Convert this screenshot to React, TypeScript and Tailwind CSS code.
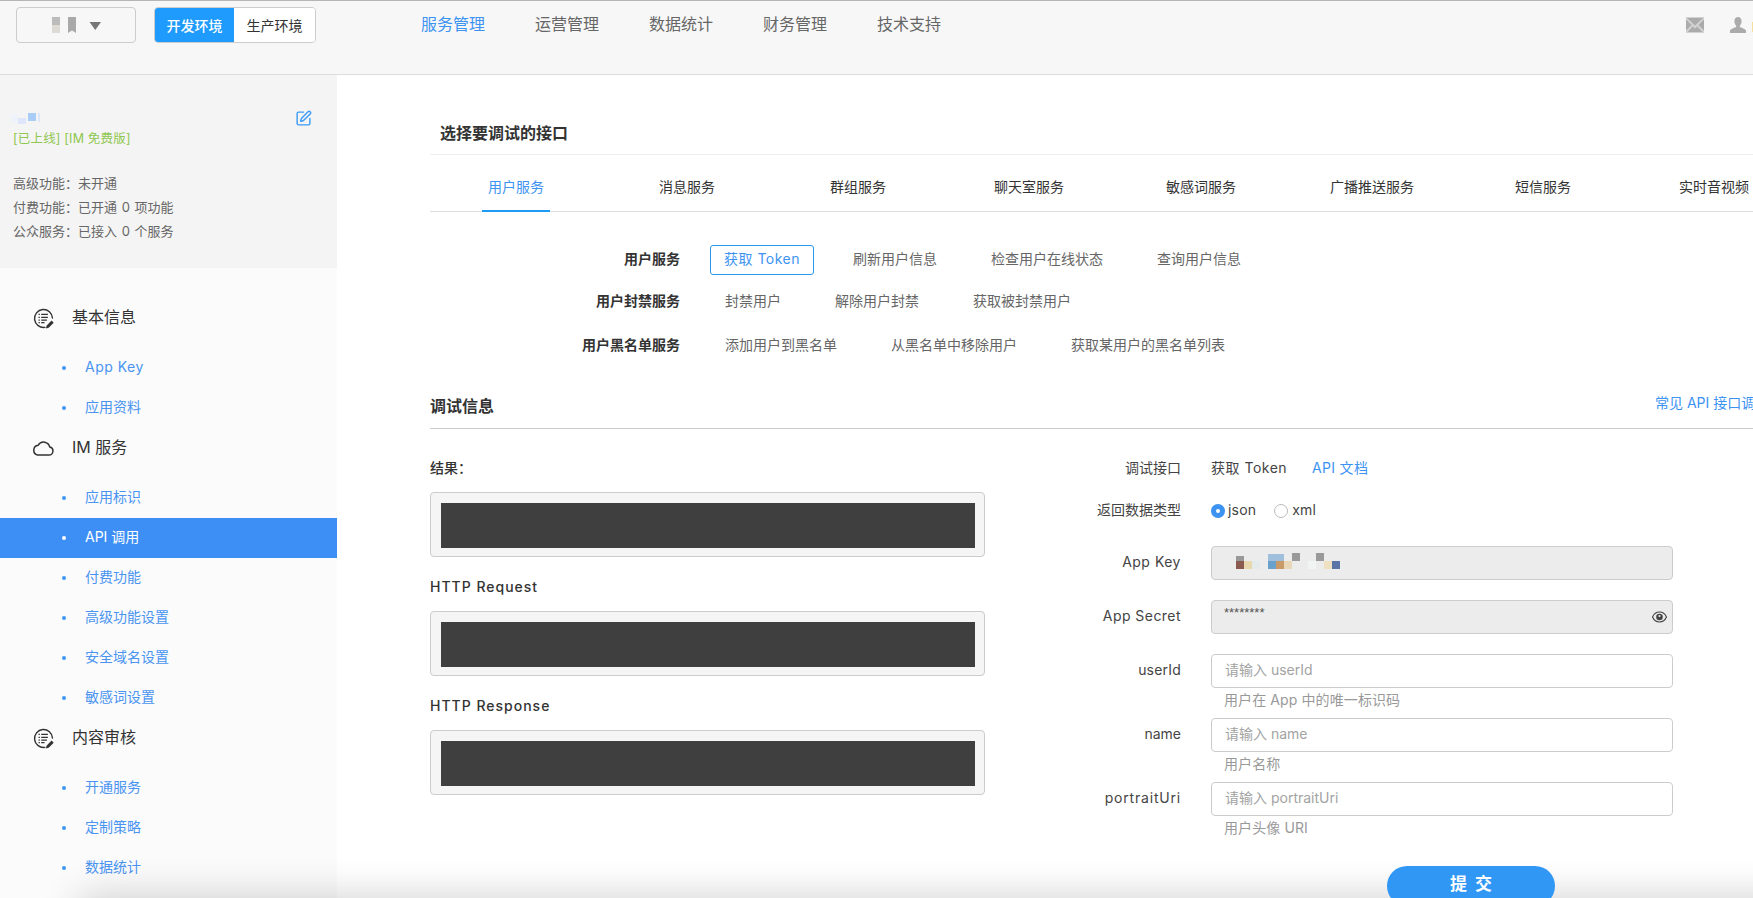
import React from "react";
import { SquarePen } from "lucide-react";

const FONT = "font-['Inter','Noto_Sans_CJK_SC',sans-serif]";

function ListEditIcon() {
  return (
    <svg width="21" height="21" viewBox="0 0 22 22" fill="none" className="shrink-0">
      <path d="M12.5 20.3A9.4 9.4 0 1 1 20.4 10.5" stroke="#333" strokeWidth="1.5" strokeLinecap="round" />
      <path d="M8.6 6.8h7M8.6 9.7h7M8.6 12.6h6M8.6 15.4h3.5" stroke="#333" strokeWidth="1.3" />
      <path d="M5.8 6.8h1.4M5.8 9.7h1.4M5.8 12.6h1.4M5.8 15.4h1.4" stroke="#333" strokeWidth="1.3" />
      <path d="M13.5 21.5l.7-3 5.2-5.4 2.3 2.3-5.3 5.4z" fill="#333" />
    </svg>
  );
}

function CloudIcon() {
  return (
    <svg width="22" height="16" viewBox="0 0 22 16" fill="none" className="shrink-0 -ml-px">
      <path
        d="M5.500 15h11.300a4 4 0 0 0 1-7.900A6.300 6.300 0 0 0 6.200 5.200 5 5 0 0 0 5.500 15z"
        stroke="#333"
        strokeWidth="1.500"
        strokeLinejoin="round"
      />
    </svg>
  );
}

function MailIcon() {
  return (
    <svg width="18" height="16" viewBox="0 0 18 16">
      <rect width="18" height="16" fill="#d2d2d2" />
      <path d="M1 1h16L9 8.600z" fill="#ababab" />
      <path d="M0 2.500v11l5.600-5.600zM18 2.500v11l-5.600-5.600z" fill="#ababab" />
      <path d="M1.500 15l5.200-5.600L9 11.400l2.300-2 5.200 5.600z" fill="#ababab" />
    </svg>
  );
}

function PersonIcon() {
  return (
    <svg width="16" height="16" viewBox="0 0 16 16">
      <path d="M8 0c2.200 0 3.600 1.700 3.600 4.200 0 1.800-.8 3.500-1.700 4.400v1.300c.9.700 5.100 1.400 6.100 3.500V16H0v-2.600c1-2.100 5.200-2.800 6.100-3.500V8.600C5.200 7.700 4.400 6 4.400 4.200 4.400 1.700 5.800 0 8 0z" fill="#ababab" />
    </svg>
  );
}

function EyeIcon() {
  return (
    <svg width="15" height="12" viewBox="0 0 15 12">
      <path d="M0.500 6C2 2.500 4.500 1 7.500 1s5.500 1.500 7 5c-1.500 3.500-4 5-7 5s-5.500-1.500-7-5z" fill="none" stroke="#444" strokeWidth="1.200" />
      <circle cx="7.500" cy="6" r="3.300" fill="#444" />
      <circle cx="7.500" cy="5" r="1.100" fill="#eee" />
    </svg>
  );
}

function MenuHead({ icon, label }: { icon: React.ReactNode; label: string }) {
  return (
    <div className="flex items-center h-10 mb-2.5 text-[16px] text-[#333]">
      <span className="w-[72px] pl-[33px] flex items-center">{icon}</span>
      <span className="mb-[2px]">{label}</span>
    </div>
  );
}

function MenuItem({ label, latin, active }: { label: string; latin?: boolean; active?: boolean }) {
  return (
    <div className={active ? "flex items-center h-10 pl-[62px] text-[14px] text-white bg-[#3d8ff5]" : "flex items-center h-10 pl-[62px] text-[14px] text-[#4a94f0]"}>
      <span className={active ? "w-1 h-1 rounded-full bg-white mr-[19px]" : "w-1 h-1 rounded-full bg-[#3d96ef] mr-[19px]"} />
      <span className={latin ? "mb-[3px] tracking-[0.5px]" : "mb-[3px]"}>{label}</span>
    </div>
  );
}

const tabs = [
  { label: "用户服务", cls: "ml-[52px] text-[#3d93f2] border-[#1e9bf5]" },
  { label: "消息服务", cls: "ml-[103px] text-[#333] border-transparent" },
  { label: "群组服务", cls: "ml-[103px] text-[#333] border-transparent" },
  { label: "聊天室服务", cls: "ml-[96px] text-[#333] border-transparent" },
  { label: "敏感词服务", cls: "ml-[90px] text-[#333] border-transparent" },
  { label: "广播推送服务", cls: "ml-[82px] text-[#333] border-transparent" },
  { label: "短信服务", cls: "ml-[89px] text-[#333] border-transparent" },
  { label: "实时音视频", cls: "ml-[96px] text-[#333] border-transparent" },
];

function Api({ label, active }: { label: string; active?: boolean }) {
  return (
    <span className={active ? "h-[30px] w-[104px] pb-[3px] flex items-center justify-center rounded-[3px] border border-[#2a97f0] text-[#3d93f2] text-[14px] tracking-[0.5px]" : "h-[30px] pb-[3px] flex items-center px-[15px] text-[#666] text-[14px] whitespace-nowrap"}>
      {label}
    </span>
  );
}

function ApiRow({ title, items, cls }: { title: string; items: React.ReactNode; cls: string }) {
  return (
    <div className={"flex items-center h-[30px] " + cls}>
      <div className="w-[250px] mb-[3px] text-right font-semibold text-[14px] text-[#333]">{title}</div>
      <div className="ml-[30px] flex items-center gap-6">{items}</div>
    </div>
  );
}

function ResultBox({ title, cls, wide }: { title: string; cls: string; wide?: boolean }) {
  return (
    <div className={cls}>
      <div className={wide ? "h-6 pb-[3px] flex items-center text-[14px] font-medium text-[#333] tracking-[1px] mb-[11px]" : "h-6 pb-[3px] flex items-center text-[14px] font-medium text-[#333] mb-[11px]"}>{title}</div>
      <div className="h-[65px] border border-[#ccc] rounded-[4px] bg-[#f5f5f5] pl-[10px] pr-[9px] pt-[10px] pb-[8px]">
        <div className="h-[45px] bg-[#3f3f3f]" />
      </div>
    </div>
  );
}

function FieldLabel({ children, cls }: { children: React.ReactNode; cls?: string }) {
  return <div className={"w-[196px] mb-[3px] text-right text-[14px] text-[#444] " + (cls ?? "")}>{children}</div>;
}

function TextField({ label, name, hint, cls }: { label: string; name: string; hint: string; cls?: string }) {
  return (
    <div>
      <div className="flex items-center">
        <FieldLabel cls={cls}>{label}</FieldLabel>
        <input
          readOnly
          placeholder={"请输入 " + name}
          className="ml-[30px] w-[462px] h-[34px] px-[13px] pb-[3px] border border-[#ccc] rounded-[4px] bg-white text-[14px] outline-none placeholder:text-[#a3a3a3]"
        />
      </div>
      <div className="ml-[239px] h-[26px] pb-[3px] flex items-center text-[14px] tracking-[0.1px] text-[#999]">{hint}</div>
    </div>
  );
}

export default function App() {
  return (
    <div className={"relative w-[1753px] h-[898px] overflow-hidden flex flex-col bg-white " + FONT}>
      <header className="h-[75px] shrink-0 flex items-start bg-[#f7f7f7] border-t border-t-[#b5b5b5] border-b border-b-[#ddd]">
        <div className="ml-4 mt-[6px] w-[120px] h-9 border border-[#ccc] rounded-[4px] flex items-center pl-[35px]">
          <svg width="50" height="16" viewBox="0 0 50 16">
            <rect x="0" y="0" width="8" height="8" fill="#bcbcbc" />
            <rect x="0" y="8" width="8" height="8" fill="#dcdcd4" />
            <path d="M16 0h8v16l-4-2.500-4 2.500z" fill="#a9a9a9" />
            <path d="M37.500 5h11.500l-5.750 8z" fill="#777" />
          </svg>
        </div>
        <div className="ml-[18px] mt-[6px] w-[162px] h-9 flex border border-[#ccc] rounded-[4px] overflow-hidden text-[14px]">
          <div className="w-[79px] flex items-center justify-center bg-[#1e9bfc] text-white font-medium">开发环境</div>
          <div className="flex-1 flex items-center justify-center bg-white text-[#333]">生产环境</div>
        </div>
        <nav className="ml-[105px] mt-[11px] h-6 flex items-center gap-[50px] text-[16px] text-[#666]">
          <span className="text-[#3d93f2]">服务管理</span>
          <span>运营管理</span>
          <span>数据统计</span>
          <span>财务管理</span>
          <span>技术支持</span>
        </nav>
        <div className="ml-auto mt-4 flex items-start">
          <MailIcon />
          <span className="ml-[26px]"><PersonIcon /></span>
          <span className="ml-[6px] mt-[5px] w-px h-[10px] bg-[#f5dfa0]" />
        </div>
      </header>

      <div className="flex flex-1 min-h-0">
        <aside className="w-[337px] shrink-0 bg-[#fbfbfc]">
          <div className="h-[193px] bg-[#f4f4f4] pt-[35px] pl-[13px]">
            <div className="h-4 flex items-center justify-between pr-[25px]">
              <svg width="28" height="12" viewBox="0 0 28 12" className="-ml-px">
                <rect x="0" y="2" width="6" height="8" fill="#eef2fa" />
                <rect x="6" y="6" width="8" height="6" fill="#dfe6fb" />
                <rect x="16" y="1" width="8" height="8" fill="#a9cdf7" />
                <rect x="26" y="1" width="2" height="9" fill="#dce8f8" />
              </svg>
              <SquarePen size={17} strokeWidth={2} color="#3d9af5" />
            </div>
            <div className="mt-[3px] h-5 flex items-center text-[12.500px] tracking-[0.2px] text-[#8fc750]">[已上线] [IM 免费版]</div>
            <div className="mt-[22px] text-[13px] leading-6 text-[#666]">
              <div>高级功能：未开通</div>
              <div>付费功能：已开通 <span className="mx-px">0</span> 项功能</div>
              <div>公众服务：已接入 <span className="mx-px">0</span> 个服务</div>
            </div>
          </div>
          <div className="pt-[30px]">
            <MenuHead icon={<ListEditIcon />} label="基本信息" />
            <MenuItem label="App Key" latin />
            <MenuItem label="应用资料" />
            <MenuHead icon={<CloudIcon />} label="IM 服务" />
            <MenuItem label="应用标识" />
            <MenuItem label="API 调用" active />
            <MenuItem label="付费功能" />
            <MenuItem label="高级功能设置" />
            <MenuItem label="安全域名设置" />
            <MenuItem label="敏感词设置" />
            <MenuHead icon={<ListEditIcon />} label="内容审核" />
            <MenuItem label="开通服务" />
            <MenuItem label="定制策略" />
            <MenuItem label="数据统计" />
          </div>
        </aside>

        <main className="flex-1 min-w-0 pl-[93px] overflow-hidden">
          <div className="w-[1400px]">
            <div className="pl-[10px] pt-[43px] pb-[6px] h-[80px] border-b border-[#eee]">
              <div className="h-[30px] flex items-center text-[16px] font-semibold text-[#333]">选择要调试的接口</div>
            </div>
            <div className="h-[57px] flex items-end border-b border-[#ddd]">
              {tabs.map((t) => (
                <div key={t.label} className={"h-[47px] -mb-px px-[6px] pb-[2px] flex items-center whitespace-nowrap text-[14px] border-b-2 " + t.cls}>
                  {t.label}
                </div>
              ))}
            </div>

            <ApiRow
              title="用户服务"
              cls="mt-[33px]"
              items={
                <>
                  <Api label="获取 Token" active />
                  <Api label="刷新用户信息" />
                  <Api label="检查用户在线状态" />
                  <Api label="查询用户信息" />
                </>
              }
            />
            <ApiRow
              title="用户封禁服务"
              cls="mt-3"
              items={
                <>
                  <Api label="封禁用户" />
                  <Api label="解除用户封禁" />
                  <Api label="获取被封禁用户" />
                </>
              }
            />
            <ApiRow
              title="用户黑名单服务"
              cls="mt-[14px]"
              items={
                <>
                  <Api label="添加用户到黑名单" />
                  <Api label="从黑名单中移除用户" />
                  <Api label="获取某用户的黑名单列表" />
                </>
              }
            />

            <div className="mt-[30px] h-[38px] flex items-start border-b border-[#ccc]">
              <div className="w-[1225px] h-8 pb-[2px] flex items-center text-[16px] font-semibold text-[#333]">调试信息</div>
              <div className="h-6 pb-[2px] flex items-center whitespace-nowrap text-[14px] text-[#3d93f2]">常见 API 接口调用问题</div>
            </div>

            <div className="flex items-start">
              <div className="w-[555px] pt-7">
                <ResultBox title="结果：" cls="" />
                <ResultBox title="HTTP Request" cls="mt-[19px]" wide />
                <ResultBox title="HTTP Response" cls="mt-[19px]" wide />
              </div>

              <div className="pt-7 relative z-10">
                <div className="flex items-center h-6">
                  <FieldLabel>调试接口</FieldLabel>
                  <span className="ml-[30px] mb-[3px] text-[14px] text-[#444] tracking-[0.5px]">获取 Token</span>
                  <span className="ml-[25px] mb-[3px] text-[14px] text-[#3d93f2] tracking-[0.3px]">API 文档</span>
                </div>
                <div className="flex items-center h-6 mt-[18px]">
                  <FieldLabel>返回数据类型</FieldLabel>
                  <span className="ml-[30px] w-[14px] h-[14px] rounded-full bg-[#3d93f2] flex items-center justify-center">
                    <span className="w-1 h-1 rounded-full bg-white" />
                  </span>
                  <span className="ml-[3px] mb-[3px] text-[14px] text-[#444] tracking-[0.2px]">json</span>
                  <span className="ml-[18px] w-[14px] h-[14px] rounded-full bg-white border border-[#bbb]" />
                  <span className="ml-[4px] mb-[3px] text-[14px] text-[#444] tracking-[0.2px]">xml</span>
                </div>
                <div className="flex items-center mt-[23px]">
                  <FieldLabel cls="tracking-[0.5px]">App Key</FieldLabel>
                  <div className="ml-[30px] w-[462px] h-[34px] border border-[#ccc] rounded-[4px] bg-[#ececec] flex items-start pl-[20px] pt-[6px]">
                    <svg width="122" height="17" viewBox="0 0 122 17">
                      <rect x="4" y="3" width="8" height="5" fill="#999" />
                      <rect x="4" y="8" width="8" height="8" fill="#8b5a50" />
                      <rect x="12" y="8" width="8" height="8" fill="#e8d8b0" />
                      <rect x="20" y="8" width="8" height="8" fill="#e2eaea" />
                      <rect x="36" y="1" width="16" height="7" fill="#a0bfdc" />
                      <rect x="36" y="8" width="8" height="8" fill="#6aa0cc" />
                      <rect x="44" y="8" width="8" height="8" fill="#c89a68" />
                      <rect x="52" y="8" width="8" height="8" fill="#e8d8b8" />
                      <rect x="60" y="0" width="8" height="8" fill="#999" />
                      <rect x="76" y="8" width="8" height="8" fill="#f2f4f4" />
                      <rect x="84" y="0" width="8" height="8" fill="#999" />
                      <rect x="92" y="8" width="8" height="8" fill="#eee0c0" />
                      <rect x="100" y="8" width="8" height="8" fill="#5a74a8" />
                    </svg>
                  </div>
                </div>
                <div className="flex items-center mt-5">
                  <FieldLabel cls="tracking-[0.45px]">App Secret</FieldLabel>
                  <div className="ml-[30px] w-[462px] h-[34px] border border-[#ccc] rounded-[4px] bg-[#ececec] flex items-center justify-between pl-3 pr-[5px]">
                    <span className="font-['Liberation_Sans',sans-serif] text-[13px] text-[#555] -mt-2">********</span>
                    <EyeIcon />
                  </div>
                </div>
                <div className="mt-5">
                  <TextField label="userId" name="userId" hint="用户在 App 中的唯一标识码" cls="tracking-[0.2px]" />
                </div>
                <div className="mt-1">
                  <TextField label="name" name="name" hint="用户名称" />
                </div>
                <div className="mt-1">
                  <TextField label="portraitUri" name="portraitUri" hint="用户头像 URI" cls="tracking-[0.8px]" />
                </div>
                <div className="mt-6 ml-[402px] w-[168px] h-10 pb-[3px] rounded-[20px] bg-[#3097f5] flex items-center justify-center text-[17px] font-semibold text-white tracking-[8px] pl-[8px]">
                  提交
                </div>
              </div>
            </div>
          </div>
        </main>
      </div>

      <div className="absolute -bottom-10 left-[80px] -right-[80px] h-10 shadow-[0_0_40px_rgba(0,0,0,0.2)] pointer-events-none" />
    </div>
  );
}
